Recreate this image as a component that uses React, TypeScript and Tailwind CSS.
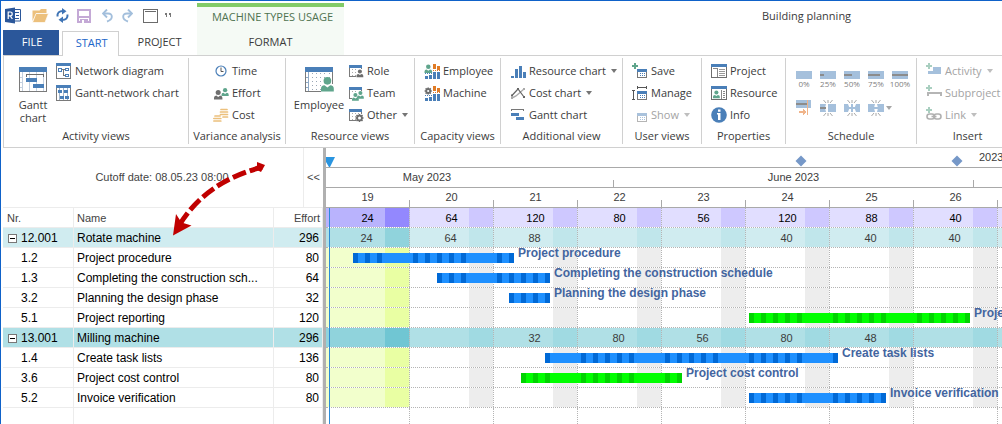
import type { ReactNode } from "react";

const BLUE = "#4a7fb8";
const GREEN = "#5fa58c";
const GREY = "#6e6e6e";
const ORANGE = "#e07b26";
const SAND = "#ecc07c";

function Svg({ w = 16, h = 16, children, soft = false }: { w?: number; h?: number; children: ReactNode; soft?: boolean }) {
  return (
    <svg
      width={w}
      height={h}
      viewBox={`0 0 ${w} ${h}`}
      fill="none"
      shapeRendering={soft ? "auto" : "crispEdges"}
      className="shrink-0"
      aria-hidden="true"
    >
      {children}
    </svg>
  );
}

function Person({ x, y, color = GREEN, s = 1 }: { x: number; y: number; color?: string; s?: number }) {
  return (
    <g transform={`translate(${x} ${y}) scale(${s})`} fill={color} shapeRendering="auto">
      <circle cx="4" cy="2.4" r="2.4" />
      <path d="M0 9V7.4Q0 5.4 2.2 5.2L4 6.6L5.8 5.2Q8 5.4 8 7.4V9Z" />
    </g>
  );
}

function Gear({ x, y, r = 3 }: { x: number; y: number; r?: number }) {
  return (
    <g transform={`translate(${x} ${y})`} stroke={GREY} shapeRendering="auto">
      <circle r={r - 0.6} strokeWidth="1.8" fill="#fff" />
      <path
        strokeWidth="1.5"
        d={`M0 ${-r - 1}V${-r + 1}M0 ${r + 1}V${r - 1}M${-r - 1} 0H${-r + 1}M${r + 1} 0H${r - 1}M${-r} ${-r}L${-r + 1.4} ${-r + 1.4}M${r} ${r}L${r - 1.4} ${r - 1.4}M${r} ${-r}L${r - 1.4} ${-r + 1.4}M${-r} ${r}L${-r + 1.4} ${r - 1.4}`}
      />
    </g>
  );
}

/* ---------- quick access icons ---------- */

const AppIcon = () => (
  <Svg w={17} h={17} soft>
    <path d="M8 2.500h7.500v11.500H8z" fill="#fff" stroke="#2b579a" />
    <path d="M10 5.500h4M11 8.500h3M10 11.500h4" stroke="#2b579a" />
    <path d="M0 2L10 0.500V16.500L0 15Z" fill="#2b579a" />
    <path d="M3.200 12V5h2q2 0 2 1.900t-2 1.900h-2M5.200 8.800L7.400 12" stroke="#fff" strokeWidth="1.200" />
  </Svg>
);
const FolderIcon = () => (
  <Svg w={17} h={14} soft>
    <path d="M0.500 12V1.500h7L9 0H14.500v4H4.500Z" fill={SAND} />
    <path d="M4 4.500h12.500L13 13.500H0.500Z" fill={SAND} stroke="#fff" strokeWidth="0.700" />
  </Svg>
);
const SyncIcon = () => (
  <Svg w={13} h={15} soft>
    <path d="M1.500 8.500Q1 3 7 3" stroke="#3f74b5" strokeWidth="2" />
    <path d="M6 0L10.500 3.200L6 6.500Z" fill="#3f74b5" />
    <path d="M11.500 6.500Q12 12 6 12" stroke="#3f74b5" strokeWidth="2" />
    <path d="M7 8.500L2.500 11.800L7 15Z" fill="#3f74b5" />
  </Svg>
);
const SaveIcon = () => (
  <Svg w={14} h={14}>
    <path d="M1 1h12v12H1z" stroke="#c4a9d6" strokeWidth="2" />
    <path d="M2 7h10v2H2zM3 10h8v4H3z" fill="#c4a9d6" />
    <path d="M5 11h2v3H5z" fill="#fff" />
  </Svg>
);
const UndoIcon = () => (
  <Svg w={11} h={14} soft>
    <path d="M1.500 4.500H6Q10 4.500 9.800 8Q9.500 11 5 12.500" stroke="#a3bfdc" strokeWidth="1.900" />
    <path d="M5 0.500L1 4.500L5 8.500" stroke="#a3bfdc" strokeWidth="1.900" />
  </Svg>
);
const RedoIcon = () => (
  <Svg w={11} h={14} soft>
    <path d="M9.500 4.500H5Q1 4.500 1.200 8Q1.500 11 6 12.500" stroke="#a3bfdc" strokeWidth="1.900" />
    <path d="M6 0.500L10 4.500L6 8.500" stroke="#a3bfdc" strokeWidth="1.900" />
  </Svg>
);
const WindowIcon = () => (
  <Svg w={15} h={14}>
    <path d="M0.500 0.500h14v13h-14z" stroke="#6b6b6b" />
    <path d="M2 2.500h11" stroke="#6b6b6b" />
  </Svg>
);

/* ---------- ribbon icons ---------- */

const SheetLarge = ({ children }: { children: ReactNode }) => (
  <Svg w={30} h={26}>
    <path d="M1.500 1.500h27v23h-27z" fill="#fff" stroke="#7a7a7a" />
    <path d="M1 0h28v5H1z" fill={BLUE} />
    {children}
  </Svg>
);
const GanttLargeIcon = () => (
  <SheetLarge>
    <path d="M4.500 5v19M11.500 5v19M18.500 5v19M25.500 5v19M2 10.500h3M2 15.500h3M2 20.500h3" stroke="#c3d0df" />
    <path d="M8.500 10V7.500h17V10" stroke="#6e6e6e" />
    <rect x="8" y="11" width="11" height="4" rx="1" fill={BLUE} />
    <rect x="15" y="17" width="11" height="4" rx="1" fill={BLUE} />
  </SheetLarge>
);
const EmployeeLargeIcon = () => (
  <SheetLarge>
    <path d="M4.500 5v19M2 10.500h3M2 15.500h3M2 20.500h3" stroke="#8fa9c6" />
    <path d="M8.500 6v17M12.500 6v17M16.500 6v17M20.500 6v17M25.500 6v17" stroke="#9aa7b5" strokeDasharray="1 3" />
    <path d="M20 12h5v5h4v9H17v-6l4-3Z" fill="#fff" />
    <Person x={17} y={10} s={1.6} />
  </SheetLarge>
);
const NetworkIcon = () => (
  <Svg>
    <path d="M0.500 0.500h14v15h-14z" fill="#fff" stroke="#7a7a7a" />
    <path d="M0 0h15v3H0z" fill={BLUE} />
    <path d="M2.500 5.500h3v3h-3zM9.500 5.500h3v2h-3zM9.500 11.500h3v2h-3z" stroke={BLUE} />
    <path d="M6 6.500h3M7.500 7v5.500H9" stroke="#777" />
  </Svg>
);
const GanttNetworkIcon = () => (
  <Svg>
    <path d="M0.500 0.500h14v15h-14z" fill="#fff" stroke="#7a7a7a" />
    <path d="M0 0h15v3H0z" fill={BLUE} />
    <path d="M3.500 3v12M7.500 3v12M11.500 3v12" stroke="#9fb4cb" />
    <path d="M2 5h4v3H2zM8 5h4v3H8zM4 11h4v3H4zM9 11h4v3H9z" fill={BLUE} />
  </Svg>
);
const TimeIcon = () => (
  <Svg soft>
    <circle cx="8" cy="8" r="5" stroke={BLUE} strokeWidth="1.200" />
    <path d="M8 4.500V8.500H10.500" stroke="#555" />
  </Svg>
);
const EffortIcon = () => (
  <Svg>
    <Person x={1} y={5} color={GREY} s={1.050} />
    <Person x={8.500} y={3} s={0.900} />
  </Svg>
);
const CoinsIcon = () => (
  <Svg soft>
    <path d="M8 2.500h6M7.500 5h7M7.500 7.500h7M10 10h4.500M2 9h5M0.800 11.500h7M0.800 14h7" stroke={SAND} strokeWidth="1.700" strokeLinecap="round" />
  </Svg>
);
const SmallSheet = ({ children }: { children: ReactNode }) => (
  <Svg>
    <path d="M1.500 2.500h12v11h-12z" fill="#fff" stroke="#7a7a7a" />
    <path d="M1 2h13v3H1z" fill={BLUE} />
    <path d="M4.500 6v7M7.500 6v7M10.500 6v7" stroke="#aaa" strokeDasharray="1 2" />
    {children}
  </Svg>
);
const RoleIcon = () => (
  <SmallSheet>
    <path d="M8 6h7v10H8z" fill="#fff" />
    <Person x={8.500} y={6.500} s={0.850} color={GREY} />
  </SmallSheet>
);
const TeamIcon = () => (
  <SmallSheet>
    <path d="M4 9h6V6h6v10H4z" fill="#fff" />
    <Person x={4} y={8} s={0.850} />
    <Person x={9} y={6} s={0.850} />
  </SmallSheet>
);
const OtherIcon = () => (
  <SmallSheet>
    <path d="M8 7h8v9H8z" fill="#fff" />
    <Gear x={11.500} y={11} />
  </SmallSheet>
);
const CapacityBars = () => (
  <>
    <path d="M9 1h3v5H9zM13 3h3v4h-3z" fill={ORANGE} />
    <path d="M9 7.500h7" stroke={ORANGE} strokeDasharray="1 1" />
    <path d="M1 10.500h7" stroke={BLUE} strokeDasharray="1 1" />
    <path d="M9 9h3v7H9zM13 9h3v7h-3zM5 12h3v4H5zM1 13h3v3H1z" fill={BLUE} />
  </>
);
const CapEmployeeIcon = () => (
  <Svg>
    <CapacityBars />
    <Person x={0.500} y={1.500} s={0.950} />
  </Svg>
);
const CapMachineIcon = () => (
  <Svg>
    <CapacityBars />
    <Gear x={4.200} y={6} r={2.600} />
  </Svg>
);
const ResourceChartIcon = () => (
  <Svg>
    <path d="M1 13h3v2H1zM5 6h3v9H5zM9 3h3v12H9zM13 9h3v6h-3z" fill={BLUE} />
  </Svg>
);
const CostChartIcon = () => (
  <Svg soft>
    <path d="M2 13L6 11L14 4" stroke="#aaa" strokeWidth="1.400" />
    <path d="M2 10.500L8 4L14 12" stroke="#666" strokeWidth="1.200" />
    <path d="M1 9.500h2v2H1zM7 3h2v2H7zM13 11h2v2h-2z" fill="#666" />
    <path d="M13 3h2v2h-2zM1 12h2v2H1z" fill="#aaa" />
  </Svg>
);
const GanttChartIcon = () => (
  <Svg>
    <path d="M1.500 4V2.500h12V4" stroke="#777" />
    <rect x="1" y="6" width="8" height="3" fill={BLUE} />
    <rect x="6" y="10" width="8" height="3" fill={BLUE} />
  </Svg>
);
const MiniView = ({ color = "#777", head = BLUE }: { color?: string; head?: string }) => (
  <>
    <path d="M5.500 6.500h9v8h-9z" fill="#fff" stroke={color} />
    <path d="M5 6h10v3H5z" fill={head} />
    <path d="M7.500 10.500h6M7.500 12.500h6" stroke={head} strokeDasharray="1 1" />
  </>
);
const ViewSaveIcon = () => (
  <Svg>
    <MiniView />
    <path d="M3 0v6M0 3h6" stroke={GREEN} strokeWidth="2" />
  </Svg>
);
const ViewManageIcon = () => (
  <Svg>
    <MiniView />
    <path d="M5 2.500h10M5.500 1v3M14.500 1v3M1.500 6v9M0 5.500h3M0 14.500h3" stroke="#555" />
  </Svg>
);
const ViewShowIcon = () => (
  <Svg>
    <MiniView color="#b5b5b5" head="#a9c2dc" />
  </Svg>
);
const ProjectIcon = () => (
  <Svg>
    <path d="M0.500 1.500h15v13h-15z" fill="#fff" stroke="#6e6e6e" />
    <path d="M0 1h16v3H0z" fill={BLUE} />
    <path d="M6.500 5v8.500M2 5.500h4" stroke="#888" />
    <path d="M8 6.500h6M8 8.500h6M8 10.500h6M8 12.500h6" stroke="#999" />
  </Svg>
);
const ResourceIcon = () => (
  <Svg>
    <path d="M0.500 1.500h15v13h-15z" fill="#fff" stroke="#6e6e6e" />
    <path d="M0 1h16v3H0z" fill={BLUE} />
    <Person x={2} y={5.500} s={0.850} />
    <path d="M10.500 5v9M12 6.500h2M12 8.500h2M12 10.500h2M12 12.500h2" stroke="#888" />
  </Svg>
);
const InfoIcon = () => (
  <Svg soft>
    <circle cx="8" cy="8" r="7.800" fill={BLUE} />
    <path d="M7 2.500h2.500v2.200H7zM6 6h3.500v7H7V7.500H6z" fill="#fff" />
  </Svg>
);
const PALE = "#a5c0dc";
const InsertPlus = () => <path d="M3 0v6M0 3h6" stroke="#a9cfc0" strokeWidth="2" />;
const ActivityIcon = () => (
  <Svg>
    <path d="M7 4h8v7H2V8h5z" fill={PALE} />
    <InsertPlus />
  </Svg>
);
const SubprojectIcon = () => (
  <Svg>
    <path d="M2 11V7.500h13V11" stroke="#b5b5b5" strokeWidth="2" />
    <InsertPlus />
  </Svg>
);
const LinkIcon = () => (
  <Svg soft>
    <rect x="1" y="7" width="7.500" height="5" rx="2.500" stroke="#b0b0b0" strokeWidth="1.600" />
    <rect x="8" y="7" width="7" height="5" rx="2.500" stroke="#b0b0b0" strokeWidth="1.600" />
    <path d="M5.500 9.500h5" stroke="#b0b0b0" strokeWidth="1.600" />
    <InsertPlus />
  </Svg>
);

const ProgressIcon = ({ done }: { done: number }) => (
  <Svg h={8}>
    <path d="M0 0h16v8H0z" fill={PALE} />
    <path d={`M0 3h${done}v2H0z`} fill="#8c8c8c" />
  </Svg>
);
const MoveIcon = () => (
  <Svg>
    <path d="M0 0h15v8H0z" fill={PALE} />
    <path d="M0 3h12v2H0z" fill="#8c8c8c" />
    <path d="M11.500 0v15" stroke="#f0b48a" />
    <path d="M3 11h4v2H3zM7 9l3.500 3L7 15z" fill="#f0b48a" />
  </Svg>
);
const SplitIcon = ({ kind }: { kind: number }) => (
  <Svg soft>
    <path d="M3.500 0L6 3M8 0V3M12.500 0L10 3M3.500 16L6 13M8 16V13M12.500 16L10 13" stroke="#a8a8a8" />
    {kind === 0 && <path d="M0 4h6l-1 4 1 4H0zM8 4h8v8H8z" fill={PALE} />}
    {kind === 1 && <path d="M0 4h4l1.500 4L4 12H0zM7 4h2v8H7zM12 4h4v8h-4l-1.500-4z" fill={PALE} />}
    {kind === 2 && <path d="M0 4h7l-1 4 1 4H0zM9 4h7v8H9l1-4z" fill={PALE} />}
    {kind === 0 && <path d="M0 7h6v2H0z" fill="#8c8c8c" />}
    {kind > 0 && <path d="M3.500 8h9" stroke={PALE} strokeWidth="2" />}
  </Svg>
);

/* ---------- ribbon building blocks ---------- */

const Caret = () => <span className="ml-[2px] h-0 w-0 border-x-[3px] border-t-4 border-x-transparent border-t-current opacity-70" />;

type CommandProps = { icon: ReactNode; label: string; menu?: boolean; disabled?: boolean };

function Command({ icon, label, menu, disabled }: CommandProps) {
  return (
    <button type="button" disabled={disabled} className="flex h-[22px] items-center gap-[3px] whitespace-nowrap disabled:text-[#a3a3a3]">
      {icon}
      <span>{label}</span>
      {menu && <Caret />}
    </button>
  );
}

function LargeCommand({ icon, label }: { icon: ReactNode; label: string }) {
  return (
    <button type="button" className="flex w-[50px] flex-col items-center pt-[7px] leading-[13px]">
      {icon}
      <span className="mt-[5px]">{label}</span>
    </button>
  );
}

function Group({ title, className, children }: { title: string; className: string; children: ReactNode }) {
  return (
    <section aria-label={title} className={`mt-[2px] flex h-[86px] shrink-0 flex-col border-r border-[#d0d0d0] pt-[2px] ${className}`}>
      <div className="flex h-[66px] shrink-0 items-start">{children}</div>
      <h2 className="h-[18px] shrink-0 self-center whitespace-nowrap leading-[20px]">{title}</h2>
    </section>
  );
}

const Stack = ({ className = "", children }: { className?: string; children: ReactNode }) => (
  <div className={`flex flex-col items-start ${className}`}>{children}</div>
);

function Ribbon() {
  return (
    <div className="flex h-[93px] overflow-hidden border-y border-l border-[#d0d0d0] text-[11px] text-[#3b3b3b]">
      <Group title="Activity views" className="w-[185px]">
        <div className="ml-[4px]">
          <LargeCommand icon={<GanttLargeIcon />} label="Gantt chart" />
        </div>
        <Stack className="-ml-[2px]">
          <Command icon={<NetworkIcon />} label="Network diagram" />
          <Command icon={<GanttNetworkIcon />} label="Gantt-network chart" />
        </Stack>
      </Group>
      <Group title="Variance analysis" className="w-[97px]">
        <Stack className="ml-[24px]">
          <Command icon={<TimeIcon />} label="Time" />
          <Command icon={<EffortIcon />} label="Effort" />
          <Command icon={<CoinsIcon />} label="Cost" />
        </Stack>
      </Group>
      <Group title="Resource views" className="w-[129px]">
        <div className="ml-[8px]">
          <LargeCommand icon={<EmployeeLargeIcon />} label="Employee" />
        </div>
        <Stack className="ml-[4px]">
          <Command icon={<RoleIcon />} label="Role" />
          <Command icon={<TeamIcon />} label="Team" />
          <Command icon={<OtherIcon />} label="Other" menu />
        </Stack>
      </Group>
      <Group title="Capacity views" className="w-[86px]">
        <Stack className="ml-[9px]">
          <Command icon={<CapEmployeeIcon />} label="Employee" />
          <Command icon={<CapMachineIcon />} label="Machine" />
        </Stack>
      </Group>
      <Group title="Additional view" className="w-[122px]">
        <Stack className="ml-[9px]">
          <Command icon={<ResourceChartIcon />} label="Resource chart" menu />
          <Command icon={<CostChartIcon />} label="Cost chart" menu />
          <Command icon={<GanttChartIcon />} label="Gantt chart" />
        </Stack>
      </Group>
      <Group title="User views" className="w-[79px]">
        <Stack className="ml-[9px]">
          <Command icon={<ViewSaveIcon />} label="Save" />
          <Command icon={<ViewManageIcon />} label="Manage" />
          <Command icon={<ViewShowIcon />} label="Show" menu disabled />
        </Stack>
      </Group>
      <Group title="Properties" className="w-[84px]">
        <Stack className="ml-[9px]">
          <Command icon={<ProjectIcon />} label="Project" />
          <Command icon={<ResourceIcon />} label="Resource" />
          <Command icon={<InfoIcon />} label="Info" />
        </Stack>
      </Group>
      <Group title="Schedule" className="w-[131px]">
        <div className="ml-[6px] mt-[11px] grid grid-cols-[repeat(5,24px)] gap-y-[12px] text-[8px] leading-[8px] text-[#808080]">
          {[
            ["0%", 0],
            ["25%", 4],
            ["50%", 8],
            ["75%", 12],
            ["100%", 16],
          ].map(([label, done]) => (
            <button key={label} type="button" disabled className="flex flex-col items-center gap-[1px]">
              <ProgressIcon done={done as number} />
              <span>{label}</span>
            </button>
          ))}
          <button type="button" disabled aria-label="Move" className="flex justify-center">
            <MoveIcon />
          </button>
          <button type="button" disabled aria-label="Split" className="flex justify-center">
            <SplitIcon kind={0} />
          </button>
          <button type="button" disabled aria-label="Divide" className="flex justify-center">
            <SplitIcon kind={1} />
          </button>
          <button type="button" disabled aria-label="Join" className="flex justify-center">
            <SplitIcon kind={2} />
          </button>
          <button type="button" disabled aria-label="More" className="-ml-[4px] flex items-center">
            <Caret />
          </button>
        </div>
      </Group>
      <Group title="Insert" className="w-[102px]">
        <Stack className="ml-[9px]">
          <Command icon={<ActivityIcon />} label="Activity" menu disabled />
          <Command icon={<SubprojectIcon />} label="Subproject" menu disabled />
          <Command icon={<LinkIcon />} label="Link" menu disabled />
        </Stack>
      </Group>
    </div>
  );
}

/* ---------- title bar and tabs ---------- */

function QuickButton({ label, className = "", children }: { label: string; className?: string; children: ReactNode }) {
  return (
    <button type="button" aria-label={label} className={`shrink-0 ${className}`}>
      {children}
    </button>
  );
}

function Header() {
  return (
    <header className="flex h-[54px] text-[11px] text-[#3b3b3b]">
      <div className="flex w-[194px] shrink-0 flex-col">
        <div className="flex h-[29px] items-center pl-[2px]">
          <QuickButton label="Application"><AppIcon /></QuickButton>
          <QuickButton label="Open" className="ml-[10px]"><FolderIcon /></QuickButton>
          <QuickButton label="Refresh" className="ml-[7px]"><SyncIcon /></QuickButton>
          <QuickButton label="Save file" className="ml-[8px]"><SaveIcon /></QuickButton>
          <QuickButton label="Undo" className="ml-[11px]"><UndoIcon /></QuickButton>
          <QuickButton label="Redo" className="ml-[9px]"><RedoIcon /></QuickButton>
          <QuickButton label="Window" className="ml-[10px]"><WindowIcon /></QuickButton>
          <QuickButton label="Customize" className="ml-[7px]">
            <Svg w={6} h={5}>
              <path d="M0 0h2v2H0zM1 2h1v2H1zM4 0h2v2H4zM5 2h1v2H5z" fill="#777" />
            </Svg>
          </QuickButton>
        </div>
        <nav className="flex h-[25px] gap-[3px]">
          <button type="button" className="w-[57px] bg-[#2b579a] pl-[2px] text-white">FILE</button>
          <button type="button" className="relative -mb-px mt-px w-[58px] border border-b-0 border-[#d0d0d0] bg-white pb-[2px] pl-[2px] text-[#1b66c9]">START</button>
          <button type="button" className="w-[76px]">PROJECT</button>
        </nav>
      </div>
      <div className="mt-[2px] flex w-[147px] shrink-0 flex-col border-t-4 border-[#82cb68] bg-[#f5faf5]">
        <div className="flex h-[23px] items-center justify-center pb-[3px] pl-[4px] text-[#4f7350]">MACHINE TYPES USAGE</div>
        <button type="button" className="flex-1">FORMAT</button>
      </div>
      <h1 className="flex h-[29px] items-center whitespace-nowrap pl-[418px] pt-[2px]">Building planning</h1>
    </header>
  );
}

/* ---------- data ---------- */

type Tone = "blue" | "green";
type Row = {
  nr: string;
  name: string;
  effort: number;
  kind: "light" | "deep" | "task";
  loads?: Record<number, number>;
  bar?: { from: number; to: number; tone: Tone; label: string };
};

const WEEKS = [19, 20, 21, 22, 23, 24, 25, 26];
const TOTALS: Record<number, number> = { 19: 24, 20: 64, 21: 120, 22: 80, 23: 56, 24: 120, 25: 88, 26: 40 };

/* Bar positions count pixels from the left edge of the chart, 12 px per day. */
const ROWS: Row[] = [
  { nr: "12.001", name: "Rotate machine", effort: 296, kind: "light", loads: { 19: 24, 20: 64, 21: 88, 24: 40, 25: 40, 26: 40 } },
  { nr: "1.2", name: "Project procedure", effort: 80, kind: "task", bar: { from: 27, to: 188, tone: "blue", label: "Project procedure" } },
  { nr: "1.3", name: "Completing the construction sch...", effort: 64, kind: "task", bar: { from: 111, to: 224, tone: "blue", label: "Completing the construction schedule" } },
  { nr: "3.2", name: "Planning the design phase", effort: 32, kind: "task", bar: { from: 183, to: 224, tone: "blue", label: "Planning the design phase" } },
  { nr: "5.1", name: "Project reporting", effort: 120, kind: "task", bar: { from: 423, to: 644, tone: "green", label: "Project reporting" } },
  { nr: "13.001", name: "Milling machine", effort: 296, kind: "deep", loads: { 21: 32, 22: 80, 23: 56, 24: 80, 25: 48 } },
  { nr: "1.4", name: "Create task lists", effort: 136, kind: "task", bar: { from: 219, to: 512, tone: "blue", label: "Create task lists" } },
  { nr: "3.6", name: "Project cost control", effort: 80, kind: "task", bar: { from: 195, to: 356, tone: "green", label: "Project cost control" } },
  { nr: "5.2", name: "Invoice verification", effort: 80, kind: "task", bar: { from: 423, to: 560, tone: "blue", label: "Invoice verification" } },
];

const CELL_TONES = {
  total: { past: "bg-[#b9b3fd]", pastEnd: "bg-[#9388fe]", day: "bg-[#e1deff]", end: "bg-[#cec8ff]" },
  light: { past: "bg-[#b0e0e6]", pastEnd: "bg-[#90d3dc]", day: "bg-[#d0ecf0]", end: "bg-[#c0e6eb]" },
  deep: { past: "bg-[#90d3dc]", pastEnd: "bg-[#70c6d3]", day: "bg-[#b0e0e6]", end: "bg-[#a0dae2]" },
  task: { past: "bg-[#f2ffcc]", pastEnd: "bg-[#e9ffa3]", day: "bg-white", end: "bg-[#ededed]" },
};

/* ---------- task table ---------- */

const ROW_BG = { light: "bg-[#d0ecf0]", deep: "bg-[#b0e0e6]", task: "bg-white" };
const CELL = "h-[20px] border-b border-r border-[#ececec] pb-0 pt-[2px] font-normal leading-[17px]";

function TaskTable() {
  return (
    <div className="relative flex w-[320px] shrink-0 flex-col">
      <div className="flex h-[60px] border-b border-[#ececec] text-[11px] text-[#444]">
        <div className="flex flex-1 items-center justify-center pl-[18px]">Cutoff date: 08.05.23 08:00</div>
        <button type="button" aria-label="Collapse table" className="w-[20px] border-l border-[#ececec]">&lt;&lt;</button>
      </div>
      <table className="w-full table-fixed border-separate border-spacing-0 text-[12px] text-black">
        <colgroup>
          <col className="w-[71px]" />
          <col />
          <col className="w-[49px]" />
        </colgroup>
        <thead className="text-left text-[11px] text-[#444]">
          <tr>
            <th className={`${CELL} pl-[4px] pr-0`}>Nr.</th>
            <th className={`${CELL} pl-[3px] pr-0`}>Name</th>
            <th className={`${CELL} pl-0 pr-[2px] text-right`}>Effort</th>
          </tr>
        </thead>
        <tbody>
          {ROWS.map((row) => (
            <tr key={row.nr} className={ROW_BG[row.kind]}>
              <td className={`${CELL} px-0`}>
                <div className="flex items-center gap-[4px] pl-[5px]">
                  {row.kind === "task" ? (
                    <span className="w-[9px]" />
                  ) : (
                    <button type="button" aria-label={`Collapse ${row.name}`} className="flex h-[9px] w-[9px] items-center justify-center border border-[#777] bg-white">
                      <span className="h-px w-[5px] bg-black" />
                    </button>
                  )}
                  {row.nr}
                </div>
              </td>
              <td className={`${CELL} whitespace-nowrap pl-[3px] pr-0`}>{row.name}</td>
              <td className={`${CELL} pl-0 pr-[3px] text-right`}>{row.effort}</td>
            </tr>
          ))}
        </tbody>
      </table>
      <div className="flex flex-1">
        <div className="w-[71px] border-r border-[#ececec]" />
        <div className="flex-1 border-r border-[#ececec]" />
        <div className="w-[49px] border-r border-[#ececec]" />
      </div>
      <svg width="100" height="80" viewBox="0 0 100 80" fill="none" className="pointer-events-none absolute left-[165px] top-[12px]" aria-hidden="true">
        <path d="M94 7C70 14 36 26 12 64" stroke="#c00000" strokeWidth="5" strokeDasharray="14 4" strokeDashoffset="1" />
        <path d="M89 2L97 5L93 12L89 10Z" fill="#c00000" />
        <path d="M5 75.500L8 54L13.500 62.500L23.500 65.500Z" fill="#c00000" />
      </svg>
    </div>
  );
}

/* ---------- chart ---------- */

function WeekCell({ kind, week, text }: { kind: keyof typeof CELL_TONES; week: number; text?: number }) {
  const tone = CELL_TONES[kind];
  const past = week === 19;
  return (
    <div className={`grid w-[84px] shrink-0 border-r border-dotted border-[#b4b4b4] ${past ? tone.past : tone.day}`}>
      <div className={`col-start-1 row-start-1 w-[24px] justify-self-end ${past ? tone.pastEnd : tone.end}`} />
      <span className={`col-start-1 row-start-1 place-self-center pt-[2px] leading-[17px] ${kind === "total" ? "text-black" : "pr-[2px] text-[#3c3c3c]"}`}>
        {text}
      </span>
    </div>
  );
}

function WeekRow({ kind, values }: { kind: keyof typeof CELL_TONES; values?: Record<number, number> }) {
  return (
    <div className="flex h-[20px] border-b border-dotted border-[#b4b4b4]">
      {WEEKS.map((week) => (
        <WeekCell key={week} kind={kind} week={week} text={values?.[week]} />
      ))}
      <div className={`flex-1 ${CELL_TONES[kind].day}`} />
    </div>
  );
}

function Bar({ row, index }: { row: Row; index: number }) {
  if (!row.bar) return null;
  const { from, to, tone, label } = row.bar;
  const shifts: number[] = [];
  for (let week = 0; week < WEEKS.length; week++) {
    for (let day = 0; day < 5; day++) {
      const start = week * 84 + day * 12 + 3;
      if (start >= from && start < to) shifts.push(start - from);
    }
  }
  return (
    <div className="absolute flex" style={{ left: from, top: index * 20 + 5 }}>
      <div className={`relative h-[10px] ${tone === "blue" ? "bg-[#1e90ff]" : "bg-[#00ff00]"}`} style={{ width: to - from }}>
        {shifts.map((left) => (
          <span key={left} className={`absolute h-[10px] w-[5px] ${tone === "blue" ? "bg-[#0069d6]" : "bg-[#00d400]"}`} style={{ left }} />
        ))}
      </div>
      <span className="-mt-[6px] ml-[4px] h-[12px] whitespace-nowrap text-[12px] font-bold leading-[12px] text-[#43659f]">{label}</span>
    </div>
  );
}

function Diamond({ left }: { left: number }) {
  return (
    <svg width="12" height="12" viewBox="0 0 12 12" className="absolute bottom-0" style={{ left }} aria-hidden="true">
      <path d="M6 0.500L11.500 6L6 11.500L0.500 6Z" fill="#7698c8" />
    </svg>
  );
}

function Chart() {
  return (
    <div className="flex min-w-0 flex-1 flex-col overflow-hidden text-[11px] text-[#3c3c3c]">
      <div className="relative h-[20px] shrink-0 overflow-hidden border-b border-[#a9a9a9] pl-[653px] leading-[19px]">
        <svg width="9" height="10" viewBox="0 0 9 10" className="absolute bottom-0 left-0" aria-hidden="true">
          <path d="M0 0H9L4 10H3L0 5Z" fill="#2a95e0" />
        </svg>
        <Diamond left={469} />
        <Diamond left={625} />
        2023
      </div>
      <div className="flex h-[20px] shrink-0 border-b border-[#a9a9a9] leading-[19px]">
        <div className="flex w-[288px] shrink-0 items-end">
          <span className="w-[202px] text-center">May 2023</span>
          <span className="ml-auto h-[7px] w-px bg-[#a9a9a9]" />
        </div>
        <div className="flex w-[360px] shrink-0 items-end">
          <span className="flex-1 text-center">June 2023</span>
          <span className="h-[7px] w-px bg-[#a9a9a9]" />
        </div>
      </div>
      <div className="flex h-[20px] shrink-0 border-b border-[#a9a9a9] leading-[19px]">
        {WEEKS.map((week) => (
          <div key={week} className="flex w-[84px] shrink-0 items-end">
            <span className="flex-1 text-center">{week}</span>
            <span className="h-[7px] w-px bg-[#a9a9a9]" />
          </div>
        ))}
      </div>
      <div className="relative flex flex-1 flex-col">
        <WeekRow kind="total" values={TOTALS} />
        <div className="relative">
          {ROWS.map((row) => (
            <WeekRow key={row.nr} kind={row.kind} values={row.loads} />
          ))}
          {ROWS.map((row, index) => (
            <Bar key={row.nr} row={row} index={index} />
          ))}
        </div>
        <div className="flex flex-1">
          {WEEKS.map((week) => (
            <div key={week} className="w-[84px] shrink-0 border-r border-dotted border-[#b4b4b4]" />
          ))}
        </div>
        <div className="absolute inset-y-0 left-[3px] w-px bg-[#2a8bd8]" />
      </div>
    </div>
  );
}

export default function App() {
  return (
    <div className="flex min-h-screen flex-col overflow-hidden border-l border-t border-[#0f62c9] bg-white pl-[2px] font-['Open_Sans',sans-serif]">
      <Header />
      <Ribbon />
      <main className="flex flex-1 font-['Liberation_Sans',Arial,sans-serif]">
        <TaskTable />
        <div className="w-[3px] shrink-0 bg-[#b0b0b0]" />
        <Chart />
      </main>
    </div>
  );
}
